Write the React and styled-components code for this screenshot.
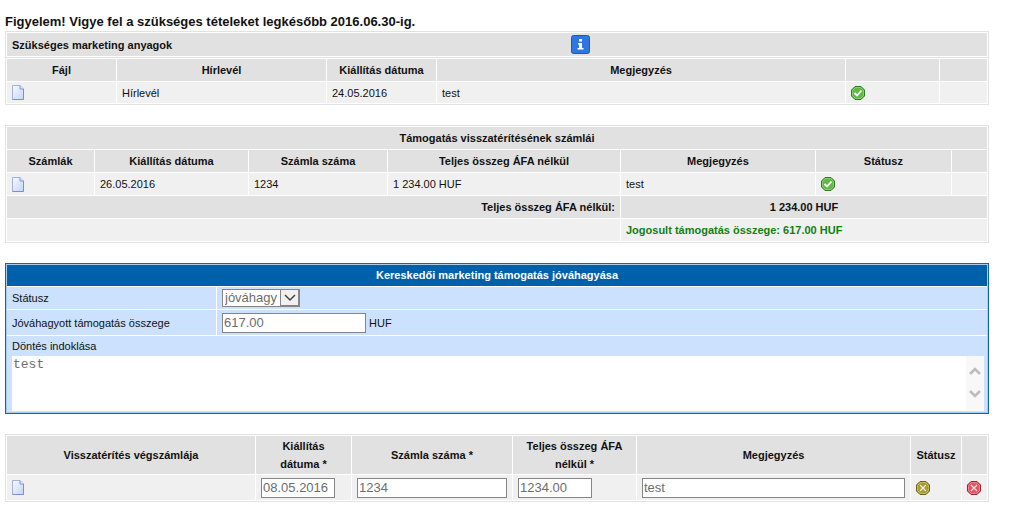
import React from 'react'
import styled, { createGlobalStyle } from 'styled-components'

const GlobalStyle = createGlobalStyle`
body {
  margin: 0;
  background: #fff;
  color: #111;
  font-family: 'Liberation Sans', Arial, sans-serif;
  font-size: 11px;
  line-height: 18px;
}
`

const Page = styled.main`
padding: 12px 34px 12px 5px;
display: flex;
flex-direction: column;
gap: 20px;
`

const Warning = styled.h1`
margin: 0;
font-size: 13px;
line-height: 19px;
font-weight: bold;
`

const TitleBar = styled.div`
border: 1px solid #e2e2e2;
border-bottom: none;
padding: 1px;
`

const TitleInner = styled.div`
display: grid;
grid-template-columns: 23fr 17fr;
align-items: center;
justify-items: start;
height: 23px;
background: #e1e1e1;
`

const TitleText = styled.h2`
margin: 0;
padding-left: 5px;
font-size: 11px;
line-height: 18px;
`

const IconButton = styled.button`
display: block;
padding: 0;
border: none;
background: none;
line-height: 0;
`

const Table = styled.table`
width: 100%;
table-layout: fixed;
border: 1px solid #e2e2e2;
border-collapse: separate;
border-spacing: 1px;
`

const Col = styled.col`
width: ${(props) => props.$w ? props.$w + 'px' : 'auto'};
`

const Th = styled.th`
height: ${(props) => props.$h || 22}px;
padding: 0 5px;
box-sizing: border-box;
background: #e1e1e1;
text-align: ${(props) => props.$align || 'center'};
`

const Td = styled.td`
height: ${(props) => props.$h || 22}px;
padding: 0 5px;
box-sizing: border-box;
background: #f0f0f0;
color: ${(props) => props.$green ? '#108010' : 'inherit'};
font-weight: ${(props) => props.$green ? 'bold' : 'normal'};
`

const Form = styled.form`
border: 1px solid #1263a8;
padding: 1px;
background: #a9cdee;
`

const FormTitle = styled.h2`
margin: 0;
font-size: 11px;
line-height: 21px;
text-align: center;
color: #fff;
background: #0060a9;
`

const FormRow = styled.div`
display: grid;
grid-template-columns: 209px 1fr;
gap: 1px;
margin-top: 1px;
background: #fff;
box-shadow: 0 -1px #fff;
`

const FormCell = styled.div`
display: flex;
align-items: center;
gap: 3px;
height: ${(props) => props.$h || 22}px;
padding: 0 5px;
background: #cbe1fe;
`

const ReasonCell = styled.div`
margin-top: 1px;
padding: 0 3px 1px 5px;
background: #cbe1fe;
box-shadow: 0 -1px #fff;
`

const ReasonLabel = styled.label`
display: block;
line-height: 20px;
`

const Input = styled.input`
display: block;
box-sizing: border-box;
width: ${(props) => props.$w || '100%'};
height: 20px;
padding: 0 1px;
border: 1px solid #858585;
background: #fff;
color: #6d6d6d;
font-family: inherit;
font-size: 13px;
`

const SelectBox = styled.div`
position: relative;
width: 78px;
height: 18px;
`

const Select = styled.select`
appearance: none;
box-sizing: border-box;
display: block;
width: 100%;
height: 18px;
padding: 0 20px 0 2px;
border: 1px solid #858585;
border-radius: 0;
background: #fff;
color: #6d6d6d;
opacity: 1;
font-family: inherit;
font-size: 13px;
line-height: 16px;
`

const SelectArrow = styled.span`
position: absolute;
top: 0;
right: 0;
box-sizing: border-box;
width: 20px;
height: 18px;
border: 1px solid #858585;
border-right-width: 2px;
border-bottom-width: 2px;
background: #f0f0f0;
display: flex;
align-items: center;
justify-content: center;
pointer-events: none;
`

const ReasonBox = styled.div`
display: flex;
background: #fff;
`

const Textarea = styled.textarea`
flex: 1;
min-width: 0;
height: 55px;
box-sizing: border-box;
padding: 1px;
border: none;
resize: none;
overflow: hidden;
background: #fff;
color: #6d6d6d;
font-family: 'Liberation Mono', monospace;
font-size: 13px;
line-height: 15px;
`

const Scroll = styled.div`
width: 18px;
padding: 11px 0 13px;
box-sizing: border-box;
display: flex;
flex-direction: column;
align-items: center;
justify-content: space-between;
background: #f8f8f8;
`

const FileIcon = () => (
  <svg width="12" height="15" viewBox="0 0 12 15">
    <defs>
      <linearGradient id="sheet" x1="0" y1="0" x2="1" y2="1">
        <stop offset="0" stopColor="#f8faff" />
        <stop offset="1" stopColor="#c3d5f8" />
      </linearGradient>
    </defs>
    <path d="M.5 .5H8L11.5 4V14.5H.5Z" fill="url(#sheet)" stroke="#a3b3e0" />
    <path d="M11.5 4V14.5H.5" fill="none" stroke="#7c8fd0" />
    <path d="M8 .5V4H11.5" fill="#e2ebfc" stroke="#8094d0" />
  </svg>
)

const InfoIcon = () => (
  <svg width="19" height="19" viewBox="0 0 19 19">
    <rect x=".5" y=".5" width="18" height="18" rx="2" fill="#2f76e4" stroke="#1f57b8" />
    <path d="M8 4h3v2.500H8zM7 8h4v5h1.500v1.500h-6V13H8V9.500H7z" fill="#fff" />
  </svg>
)

const COLORS = {
  green: ['#5fb944', '#2f7a22', '#a5dc8e'],
  olive: ['#a99c34', '#69601a', '#d8cf78'],
  red: ['#e25562', '#96232f', '#f4a0a6'],
}

const StatusIcon = ({ kind }) => {
  const [fill, edge, light] = COLORS[kind]
  return (
    <svg width="14" height="14" viewBox="0 0 14 14">
      <path d="M4 .5H10L13.500 4V10L10 13.500H4L.5 10V4Z" fill={fill} stroke={edge} />
      <path d="M4.500 1.500H9.500L12.500 4.500V9.500L9.500 12.500H4.500L1.500 9.500V4.500Z" fill="none" stroke={light} strokeOpacity=".6" />
      {kind === 'green'
        ? <path d="M3.500 7L6 9.500L10.500 4.500" fill="none" stroke="#fff" strokeWidth="1.800" />
        : <path d="M4 4L10 10M10 4L4 10" fill="none" stroke="#fff" strokeOpacity=".85" strokeWidth="1.100" />}
    </svg>
  )
}

const Chevron = ({ up, size = 12, color = '#bcbcbc', weight = 2.5 }) => (
  <svg width={size} height={size * 2 / 3} viewBox="0 0 12 8">
    <path d={up ? 'M1 7L6 2L11 7' : 'M1 1L6 6L11 1'} fill="none" stroke={color} strokeWidth={weight} />
  </svg>
)

const FileButton = () => (
  <IconButton type="button" aria-label="Fájl megnyitása"><FileIcon /></IconButton>
)

const StatusButton = ({ kind, label }) => (
  <IconButton type="button" aria-label={label}><StatusIcon kind={kind} /></IconButton>
)

const Columns = ({ widths }) => (
  <colgroup>{widths.map((w, i) => <Col key={i} $w={w} />)}</colgroup>
)

const Head = ({ titles, h }) => (
  <tr>{titles.map((t, i) => <Th key={i} scope="col" $h={h}>{t}</Th>)}</tr>
)

const Materials = () => (
  <section>
    <Warning>Figyelem! Vigye fel a szükséges tételeket legkésőbb 2016.06.30-ig.</Warning>
    <TitleBar>
      <TitleInner>
        <TitleText>Szükséges marketing anyagok</TitleText>
        <IconButton type="button" aria-label="Információ"><InfoIcon /></IconButton>
      </TitleInner>
    </TitleBar>
    <Table>
      <Columns widths={[109, 209, 109, 0, 93, 47]} />
      <thead><Head titles={['Fájl', 'Hírlevél', 'Kiállítás dátuma', 'Megjegyzés', '', '']} /></thead>
      <tbody>
        <tr>
          <Td $h={21}><FileButton /></Td>
          <Td $h={21}>Hírlevél</Td>
          <Td $h={21}>24.05.2016</Td>
          <Td $h={21}>test</Td>
          <Td $h={21}><StatusButton kind="green" label="Jóváhagyva" /></Td>
          <Td $h={21} />
        </tr>
      </tbody>
    </Table>
  </section>
)

const Invoices = () => (
  <Table>
    <Columns widths={[87, 153, 138, 232, 0, 135, 35]} />
    <thead>
      <tr><Th colSpan="7">Támogatás visszatérítésének számlái</Th></tr>
      <Head titles={['Számlák', 'Kiállítás dátuma', 'Számla száma', 'Teljes összeg ÁFA nélkül', 'Megjegyzés', 'Státusz', '']} />
    </thead>
    <tbody>
      <tr>
        <Td><FileButton /></Td>
        <Td>26.05.2016</Td>
        <Td>1234</Td>
        <Td>1 234.00 HUF</Td>
        <Td>test</Td>
        <Td><StatusButton kind="green" label="Jóváhagyva" /></Td>
        <Td />
      </tr>
      <tr>
        <Th colSpan="4" $align="right">Teljes összeg ÁFA nélkül:</Th>
        <Th colSpan="3">1 234.00 HUF</Th>
      </tr>
      <tr>
        <Td colSpan="4" />
        <Td colSpan="3" $green>Jogosult támogatás összege: 617.00 HUF</Td>
      </tr>
    </tbody>
  </Table>
)

const Approval = () => (
  <Form>
    <FormTitle>Kereskedői marketing támogatás jóváhagyása</FormTitle>
    <FormRow>
      <FormCell as="label" htmlFor="status">Státusz</FormCell>
      <FormCell>
        <SelectBox>
          <Select id="status" disabled defaultValue="ok">
            <option value="ok">jóváhagy</option>
          </Select>
          <SelectArrow><Chevron color="#444" weight={1.5} /></SelectArrow>
        </SelectBox>
      </FormCell>
    </FormRow>
    <FormRow>
      <FormCell $h={25} as="label" htmlFor="amount">Jóváhagyott támogatás összege</FormCell>
      <FormCell $h={25}>
        <Input id="amount" $w="144px" disabled defaultValue="617.00" />
        <span>HUF</span>
      </FormCell>
    </FormRow>
    <ReasonCell>
      <ReasonLabel htmlFor="reason">Döntés indoklása</ReasonLabel>
      <ReasonBox>
        <Textarea id="reason" disabled defaultValue="test" />
        <Scroll>
          <Chevron up />
          <Chevron />
        </Scroll>
      </ReasonBox>
    </ReasonCell>
  </Form>
)

const FinalInvoice = () => (
  <Table>
    <Columns widths={[248, 95, 160, 123, 0, 50, 25]} />
    <thead>
      <Head h={38} titles={['Visszatérítés végszámlája', 'Kiállítás dátuma\u00a0*', 'Számla száma\u00a0*', 'Teljes összeg ÁFA nélkül\u00a0*', 'Megjegyzés', 'Státusz', '']} />
    </thead>
    <tbody>
      <tr>
        <Td $h={25}><FileButton /></Td>
        <Td $h={25}><Input aria-label="Kiállítás dátuma" $w="74px" disabled defaultValue="08.05.2016" /></Td>
        <Td $h={25}><Input aria-label="Számla száma" disabled defaultValue="1234" /></Td>
        <Td $h={25}><Input aria-label="Teljes összeg ÁFA nélkül" $w="74px" disabled defaultValue="1234.00" /></Td>
        <Td $h={25}><Input aria-label="Megjegyzés" disabled defaultValue="test" /></Td>
        <Td $h={25}><StatusButton kind="olive" label="Függőben" /></Td>
        <Td $h={25}><StatusButton kind="red" label="Törlés" /></Td>
      </tr>
    </tbody>
  </Table>
)

const App = () => {
  return (
    <>
      <GlobalStyle />
      <Page>
        <Materials />
        <Invoices />
        <Approval />
        <FinalInvoice />
      </Page>
    </>
  )
}

export default App
